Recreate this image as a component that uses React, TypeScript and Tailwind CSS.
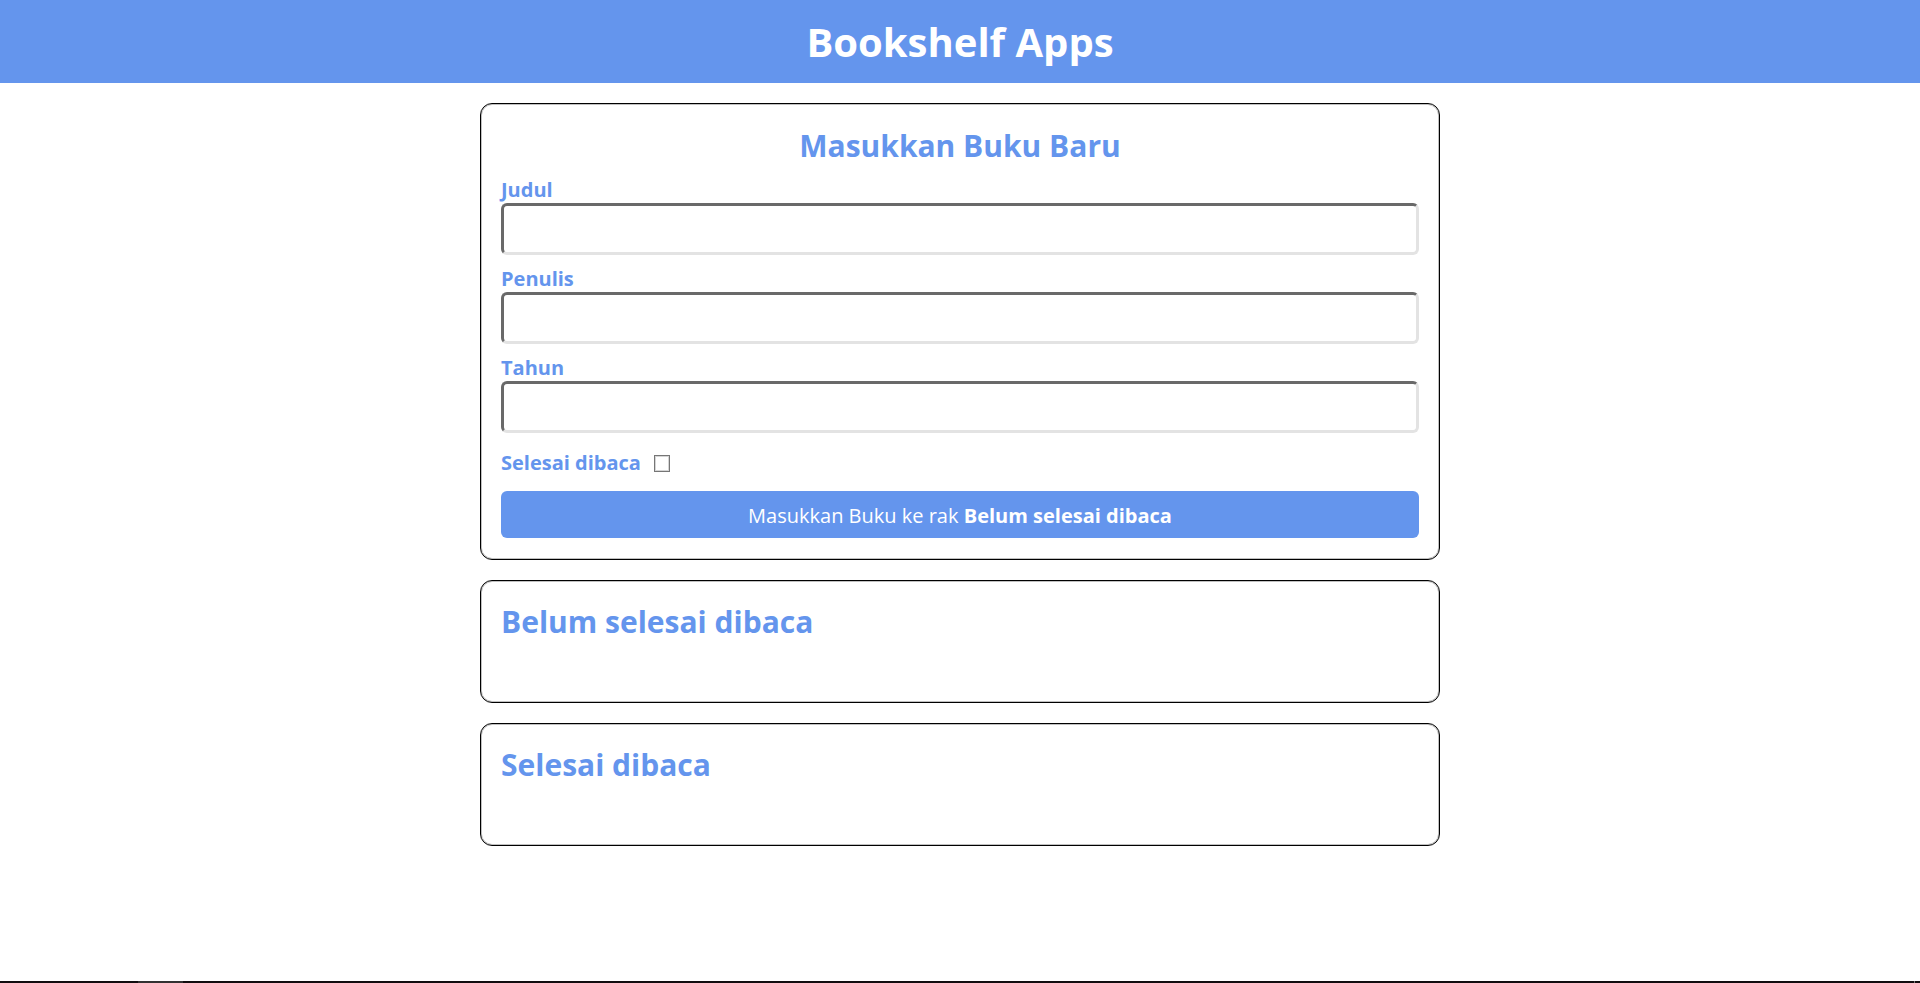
import { useState, type ReactNode } from "react";

const fields = [
  { id: "title", label: "Judul", type: "text" },
  { id: "author", label: "Penulis", type: "text" },
  { id: "year", label: "Tahun", type: "number" },
];

function Card({ children }: { children: ReactNode }) {
  return (
    <section className="rounded-xl border border-black px-5 pt-5 pb-[21px] shadow-[inset_0_0_0_1px_#c0c0c0]">
      {children}
    </section>
  );
}

function Shelf({ title }: { title: string }) {
  return (
    <Card>
      <h2 className="text-[30px] leading-[42px] font-bold">{title}</h2>
      <div className="h-[38px]" />
    </Card>
  );
}

export default function App() {
  const [done, setDone] = useState(false);

  return (
    <div className="flex min-h-screen flex-col bg-white font-['Open_Sans',sans-serif] text-[#6495ed]">
      <header className="bg-[#6495ed] py-3.5 text-center text-white">
        <h1 className="text-[40px] leading-[55px] font-bold">Bookshelf Apps</h1>
      </header>

      <main className="mx-auto flex w-1/2 flex-col gap-5 py-5">
        <Card>
          <h2 className="text-center text-[30px] leading-[44px] font-bold">Masukkan Buku Baru</h2>
          <form className="mt-[9px]" onSubmit={(e) => e.preventDefault()}>
            {fields.map((field) => (
              <div key={field.id} className="mb-[11px] flex flex-col">
                <label htmlFor={field.id} className="text-xl leading-[26px] font-bold">
                  {field.label}
                </label>
                <input
                  id={field.id}
                  type={field.type}
                  className="h-[52px] w-full rounded-md border-3 border-t-[#696969] border-r-[#e3e3e3] border-b-[#e3e3e3] border-l-[#696969] bg-white px-2 text-xl text-black"
                />
              </div>
            ))}
            <div className="mt-[17px] flex items-center gap-[13px]">
              <label htmlFor="done" className="text-xl leading-[26px] font-bold">
                Selesai dibaca
              </label>
              <input
                id="done"
                type="checkbox"
                checked={done}
                onChange={(e) => setDone(e.target.checked)}
                className="h-[17px] w-4 appearance-none border border-[#767676] bg-white shadow-[inset_0_0_0_1px_#d5d5d5] checked:bg-[#6495ed]"
              />
            </div>
            <button
              type="submit"
              className="mt-[15px] h-[47px] w-full rounded-md bg-[#6495ed] pt-0.5 text-xl text-white"
            >
              Masukkan Buku ke rak{" "}
              <span className="font-bold">{done ? "Selesai dibaca" : "Belum selesai dibaca"}</span>
            </button>
          </form>
        </Card>
        <Shelf title="Belum selesai dibaca" />
        <Shelf title="Selesai dibaca" />
      </main>

      <footer className="mt-auto flex h-0.5 justify-between bg-[#110d0f] pr-[5px] pl-[138px]">
        <div className="w-[45px] bg-[#333132]" />
        <div className="w-px bg-[#777777]" />
      </footer>
    </div>
  );
}
